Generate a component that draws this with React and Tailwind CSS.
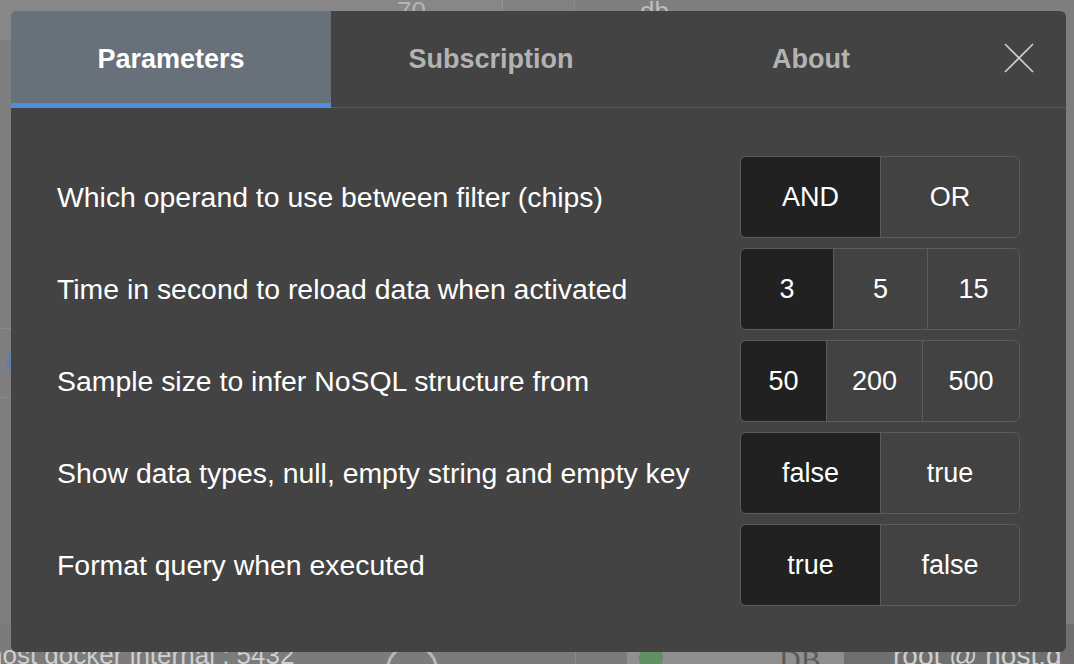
import React, { useState } from "react";

const rows = [
  {
    label: "Which operand to use between filter (chips)",
    options: ["AND", "OR"],
    widths: ["w-[139px]", "w-[139px]"],
  },
  {
    label: "Time in second to reload data when activated",
    options: ["3", "5", "15"],
    widths: ["w-[92px]", "w-[94px]", "w-[92px]"],
  },
  {
    label: "Sample size to infer NoSQL structure from",
    options: ["50", "200", "500"],
    widths: ["w-[85px]", "w-[96px]", "w-[97px]"],
  },
  {
    label: "Show data types, null, empty string and empty key",
    options: ["false", "true"],
    widths: ["w-[139px]", "w-[139px]"],
  },
  {
    label: "Format query when executed",
    options: ["true", "false"],
    widths: ["w-[139px]", "w-[139px]"],
  },
];

const tabs = ["Parameters", "Subscription", "About"];

function Segmented({ row, value, onChange }) {
  return (
    <div className="flex h-[82px] w-[280px] overflow-hidden rounded-[6px] border border-[#5c5c5c]">
      {row.options.map((opt, i) => (
        <button
          key={opt}
          onClick={() => onChange(i)}
          className={`${row.widths[i]} flex h-full items-center justify-center text-[27px] text-white ${
            i > 0 ? "border-l border-[#5c5c5c]" : ""
          } ${value === i ? "bg-[#212121]" : "bg-[#424242]"}`}
        >
          {opt}
        </button>
      ))}
    </div>
  );
}

export default function App() {
  const [tab, setTab] = useState(0);
  const [values, setValues] = useState([0, 0, 0, 0, 0]);

  return (
    <div
      className="relative h-[664px] w-[1074px] overflow-hidden bg-[#7e7e7e]"
      style={{ fontFamily: '"Liberation Sans", Arial, Helvetica, sans-serif' }}
    >
      {/* page behind the dialog */}
      <div className="flex h-full flex-col">
        <div className="flex h-[40px]">
          <div className="flex w-[503px] border-r border-[#959595] bg-[#878787]">
            <div className="ml-[397px] mt-[-2px] text-[26px] leading-none text-[#b4b4b4]">70</div>
          </div>
          <div className="w-[72px] border-r border-[#8c8c8c] bg-[#818181]" />
          <div className="flex flex-1 bg-[#7f7f7f]">
            <div className="ml-[65px] mt-[-2px] text-[26px] leading-none text-[#bdbdbd]">db</div>
          </div>
        </div>
        <div className="flex flex-1">
          <div className="flex w-[11px] flex-col">
            <div className="h-[288px]" />
            <div className="relative h-[70px] border-y border-[#8a8a8a]">
              <div className="absolute right-0 top-[24px] h-[18px] w-[4px] rounded-l-full bg-[#5f7fa8]" />
            </div>
          </div>
        </div>
        <div className="flex h-[40px] items-start">
          <div className="h-full w-[375px] bg-[#7b7b7b] pt-[18px] text-[26px] leading-none whitespace-nowrap text-[#cfcfcf]">
            <span className="ml-[-12px]">host docker internal : 5432</span>
          </div>
          <div className="flex h-full w-[200px] justify-start bg-[#7b7b7b] pl-[11px] pt-[20px]">
            <div className="h-[52px] w-[52px] shrink-0 rounded-full border-[3px] border-[#b8b8b8]" />
          </div>
          <div className="h-full w-[52px] border-l border-[#888] bg-[#7a7a7a]" />
          <div className="flex h-full w-[217px] bg-[#8f8f8f]">
            <div className="ml-[12px] mt-[22px] h-[24px] w-[24px] shrink-0 rounded-full bg-[#5f8f62]" />
            <div
              className="ml-[116px] mt-[21px] text-[30px] leading-none text-[#5a5a5a]"
              style={{ fontFamily: '"Liberation Serif", serif' }}
            >
              DB
            </div>
          </div>
          <div className="h-full flex-1 bg-[#6f6f6f] pl-[49px] pt-[18px] text-[28px] leading-none whitespace-nowrap text-[#d0d0d0]">
            root @ host.d
          </div>
        </div>
      </div>

      {/* dialog */}
      <div className="absolute left-[11px] top-[11px] flex h-[641px] w-[1055px] flex-col overflow-hidden rounded-[6px] bg-[#434343]">
        <div className="flex h-[97px] border-b border-[#5b5b5b]">
          {tabs.map((t, i) => (
            <button
              key={t}
              onClick={() => setTab(i)}
              className={`relative flex h-[96px] w-[320px] items-center justify-center text-[27px] font-bold ${
                tab === i ? "bg-[#68717a] text-white" : "text-[#b3b3b3]"
              }`}
            >
              {t}
              {tab === i && <span className="absolute bottom-[-1px] left-0 right-0 h-[5px] bg-[#4a90dc]" />}
            </button>
          ))}
          <div className="flex flex-1 items-center justify-center">
            <svg width="32" height="32" viewBox="0 0 32 32" className="mt-[-2px]">
              <path d="M2 2 L30 30 M30 2 L2 30" stroke="#cfcfcf" strokeWidth="1.6" fill="none" />
            </svg>
          </div>
        </div>

        <div className="flex flex-col gap-[10px] pl-[46px] pr-[46px] pt-[48px]">
          {rows.map((row, r) => (
            <div key={row.label} className="flex items-center justify-between">
              <span className="text-[28.4px] text-white">{row.label}</span>
              <Segmented
                row={row}
                value={values[r]}
                onChange={(i) => setValues(values.map((v, k) => (k === r ? i : v)))}
              />
            </div>
          ))}
        </div>
      </div>
    </div>
  );
}
